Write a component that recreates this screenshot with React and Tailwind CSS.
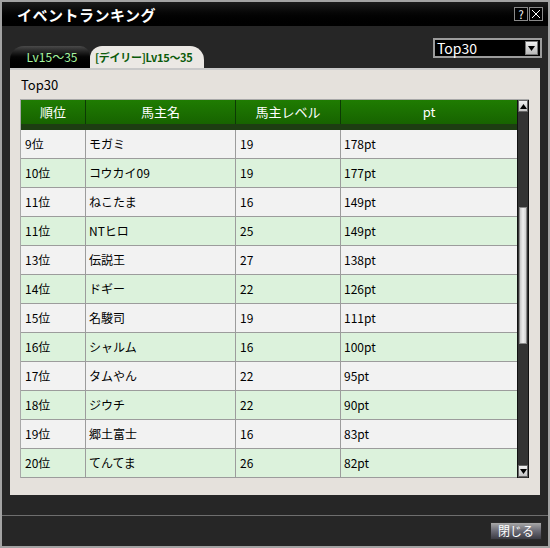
import React from 'react';

const rows = [
  ['9位', 'モガミ', '19', '178pt'],
  ['10位', 'コウカイ09', '19', '177pt'],
  ['11位', 'ねこたま', '16', '149pt'],
  ['11位', 'NTヒロ', '25', '149pt'],
  ['13位', '伝説王', '27', '138pt'],
  ['14位', 'ドギー', '22', '126pt'],
  ['15位', '名駿司', '19', '111pt'],
  ['16位', 'シャルム', '16', '100pt'],
  ['17位', 'タムやん', '22', '95pt'],
  ['18位', 'ジウチ', '22', '90pt'],
  ['19位', '郷土富士', '16', '83pt'],
  ['20位', 'てんてま', '26', '82pt'],
];

const font = { fontFamily: '"Noto Sans CJK JP", "Liberation Sans", sans-serif' };

function Arrow({ up }) {
  return (
    <svg width="7" height="5" viewBox="0 0 7 5">
      <polygon points={up ? '3.5,0 7,5 0,5' : '0,0 7,0 3.5,5'} fill="#000" />
    </svg>
  );
}

export default function App() {
  return (
    <div className="w-[550px] h-[548px] bg-[#a3a3a3] p-[2px]" style={font}>
      <div className="h-full flex flex-col bg-[#262626]">
        {/* title bar */}
        <div className="h-[24px] flex items-center justify-between pl-[15px] pr-[5px] bg-gradient-to-b from-[#1c1c1c] to-[#000]">
          <span className="text-white text-[15px] font-bold leading-none tracking-[0.5px]">イベントランキング</span>
          <div className="flex gap-[1px]">
            <div className="w-[14px] h-[14px] border border-[#8a8a8a] bg-black text-white text-[11px] leading-[12px] text-center">?</div>
            <div className="w-[14px] h-[14px] border border-[#8a8a8a] bg-black flex items-center justify-center">
              <svg width="10" height="10" viewBox="0 0 10 10"><path d="M1 1L9 9M9 1L1 9" stroke="#fff" strokeWidth="1" /></svg>
            </div>
          </div>
        </div>

        {/* tabs row */}
        <div className="h-[42px] flex items-end justify-between pl-[8px] pr-[6px]">
          <div className="flex">
            <div className="w-[80px] h-[22px] bg-gradient-to-b from-[#4a4a4a] via-[#050505] to-[#000] rounded-tl-[14px] rounded-tr-[10px] flex items-center justify-center pl-[4px] text-[#a6f7a0] text-[12px] whitespace-nowrap">
              Lv15〜35
            </div>
            <div className="w-[114px] h-[22px] bg-[#ebe8e4] rounded-tl-[12px] rounded-tr-[14px] flex items-center pl-[5px] text-[#0b5b0b] text-[11px] font-bold whitespace-nowrap tracking-[-0.3px]">
              [デイリー]Lv15〜35
            </div>
          </div>
          <div className="self-start mt-[12px] w-[109px] h-[20px] border-2 border-[#9c9c9c] bg-black flex items-center justify-between pl-[2px] pr-[2px]">
            <span className="text-white text-[14px] leading-none">Top30</span>
            <div className="w-[13px] h-[14px] bg-gradient-to-b from-[#f0f0f0] to-[#b8b8b8] border border-[#777] flex items-center justify-center">
              <Arrow />
            </div>
          </div>
        </div>

        {/* panel */}
        <div className="mx-[8px] h-[427px] bg-[#e5e1dc] border-t-2 border-[#c9c9c9] pl-[10px] pr-[11px] flex flex-col">
          <div className="h-[29px] flex items-center text-[13px] text-black pl-[1px] pt-[1px]">Top30</div>
          <div className="flex border-t border-[#a8a8a8]">
            <div className="w-[497px] border-l border-[#a8a8a8]">
              <div className="h-[30px] flex flex-col">
                <div className="flex-1 flex bg-gradient-to-b from-[#1f7c02] to-[#176300] text-white text-[13px]">
                  <div className="w-[65px] flex items-center justify-center border-r border-[#0c3a04]">順位</div>
                  <div className="w-[150px] flex items-center justify-center border-r border-[#0c3a04]">馬主名</div>
                  <div className="w-[105px] flex items-center justify-center border-r border-[#0c3a04]">馬主レベル</div>
                  <div className="flex-1 flex items-center justify-center">pt</div>
                </div>
                <div className="h-[6px] bg-[#1d3d12]" />
              </div>
              {rows.map((r, i) => (
                <div
                  key={i}
                  className={`h-[29px] flex text-[12px] text-black border-b border-[#9c9c9c] ${i % 2 ? 'bg-[#dcf2dc]' : 'bg-[#f2f2f2]'}`}
                >
                  <div className="w-[65px] flex items-center pl-[4px] border-r border-[#9c9c9c]">{r[0]}</div>
                  <div className="w-[150px] flex items-center pl-[3px] border-r border-[#9c9c9c]">{r[1]}</div>
                  <div className="w-[105px] flex items-center pl-[4px] border-r border-[#9c9c9c]">{r[2]}</div>
                  <div className="flex-1 flex items-center pl-[3px]">{r[3]}</div>
                </div>
              ))}
            </div>
            {/* scrollbar */}
            <div className="w-[12px] h-[378px] bg-[#333] border-x border-[#111] flex flex-col">
              <div className="h-[12px] bg-gradient-to-b from-[#f0f0f0] to-[#c4c4c4] border border-[#666] flex items-center justify-center">
                <Arrow up />
              </div>
              <div className="h-[95px]" />
              <div className="h-[137px] mx-[1px] bg-gradient-to-r from-[#c8c8c8] via-[#f0f0f0] to-[#d0d0d0] border border-[#888]" />
              <div className="flex-1" />
              <div className="h-[12px] mb-[1px] bg-gradient-to-b from-[#f0f0f0] to-[#c4c4c4] border border-[#666] flex items-center justify-center">
                <Arrow />
              </div>
            </div>
          </div>
        </div>

        {/* footer */}
        <div className="h-[20px]" />
        <div className="h-[1px] bg-[#6e6e6e]" />
        <div className="flex-1 flex justify-end items-start pt-[6px] pr-[6px]">
          <div className="w-[52px] h-[18px] border border-[#2a2a2a] bg-gradient-to-b from-[#a8a8a8] via-[#6a6a74] to-[#3c3c44] text-white text-[12px] leading-[16px] text-center">
            閉じる
          </div>
        </div>
      </div>
    </div>
  );
}
